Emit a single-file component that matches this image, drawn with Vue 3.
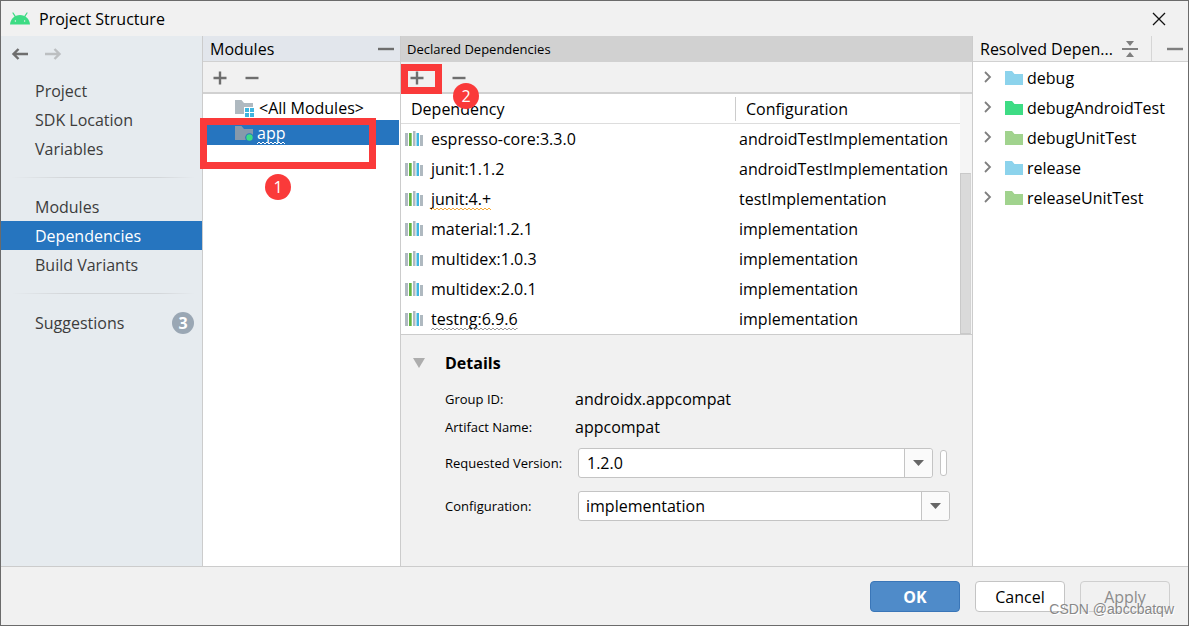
<script setup>
import { ref } from 'vue'

const sections = [
  ['Project', 'SDK Location', 'Variables'],
  ['Modules', 'Dependencies', 'Build Variants'],
  ['Suggestions'],
]
const current = ref('Dependencies')

const dependencies = [
  { name: 'espresso-core:3.3.0', config: 'androidTestImplementation' },
  { name: 'junit:1.1.2', config: 'androidTestImplementation' },
  { name: 'junit:4.+', config: 'testImplementation', mark: 'warn' },
  { name: 'material:1.2.1', config: 'implementation' },
  { name: 'multidex:1.0.3', config: 'implementation' },
  { name: 'multidex:2.0.1', config: 'implementation' },
  { name: 'testng:6.9.6', config: 'implementation', mark: 'weak' },
]

const resolved = [
  { name: 'debug', tone: 'blue' },
  { name: 'debugAndroidTest', tone: 'green' },
  { name: 'debugUnitTest', tone: 'olive' },
  { name: 'release', tone: 'blue' },
  { name: 'releaseUnitTest', tone: 'olive' },
]

const version = ref('1.2.0')
const configuration = ref('implementation')
</script>

<template>
  <div class="window">
    <header class="titlebar">
      <svg class="android" width="20" height="13" viewBox="0 0 20 13" aria-hidden="true">
        <path d="M3 1 L5.2 4.4 M17 1 L14.8 4.4" stroke="#3ddc84" stroke-width="1.2" stroke-linecap="round" />
        <path d="M0 12.5 C0.4 7 4.6 3 10 3 C15.4 3 19.6 7 20 12.5 Z" fill="#3ddc84" />
        <circle cx="5.4" cy="9" r="0.7" fill="#f1f1f1" />
        <circle cx="14.6" cy="9" r="0.7" fill="#f1f1f1" />
      </svg>
      <h1>Project Structure</h1>
      <button class="icon-btn close" aria-label="Close">
        <svg width="14" height="14" viewBox="0 0 14 14"><path d="M1 1 L13 13 M13 1 L1 13" stroke="#111" stroke-width="1.3" /></svg>
      </button>
    </header>

    <main class="body">
      <nav class="sidebar">
        <div class="history">
          <button class="icon-btn" aria-label="Back">
            <svg width="18" height="14" viewBox="0 0 18 14"><path d="M17 7 H2.500 M7.500 2 L2.500 7 L7.500 12" fill="none" stroke="#6e6e6e" stroke-width="2.400" /></svg>
          </button>
          <button class="icon-btn" aria-label="Forward" disabled>
            <svg width="18" height="14" viewBox="0 0 18 14"><path d="M1 7 H15.500 M10.500 2 L15.500 7 L10.500 12" fill="none" stroke="#bcbfc1" stroke-width="2.400" /></svg>
          </button>
        </div>
        <ul v-for="(group, i) in sections" :key="i" class="nav-group">
          <li v-for="item in group" :key="item">
            <a href="#" :class="{ active: item === current }" @click.prevent="current = item">
              {{ item }}
              <span v-if="item === 'Suggestions'" class="count">3</span>
            </a>
          </li>
        </ul>
      </nav>

      <section class="panel modules">
        <div class="panel-head">
          <h2>Modules</h2>
          <button class="icon-btn" aria-label="Hide modules">
            <svg width="16" height="4" viewBox="0 0 16 4"><path d="M0 2 H16" stroke="#6e6e6e" stroke-width="2.400" /></svg>
          </button>
        </div>
        <div class="toolbar">
          <button class="icon-btn" aria-label="Add module">
            <svg width="14" height="14" viewBox="0 0 14 14"><path d="M0.500 7 H13.500 M7 0.500 V13.500" stroke="#6e6e6e" stroke-width="2.400" /></svg>
          </button>
          <button class="icon-btn" aria-label="Remove module">
            <svg width="14" height="14" viewBox="0 0 14 14"><path d="M0.500 7 H13.500" stroke="#6e6e6e" stroke-width="2.400" /></svg>
          </button>
        </div>
        <ul class="module-tree">
          <li>
            <svg width="20" height="18" viewBox="0 0 20 18" aria-hidden="true">
              <path d="M0 1 H6.500 L9 4 H18 V15 H0 Z" fill="#afb9c0" />
              <path d="M9 8 H20 V18 H9 Z" fill="#fff" />
              <path d="M10 9 H14 V13 H10 Z M15 9 H19 V13 H15 Z M10 14 H14 V18 H10 Z M15 14 H19 V18 H15 Z" fill="#40b6e0" />
            </svg>
            <span>&lt;All Modules&gt;</span>
          </li>
          <li class="selected">
            <svg width="18" height="18" viewBox="0 0 18 18" aria-hidden="true">
              <path d="M0 2 H6.500 L9 5 H18 V16 H0 Z" fill="#8699ab" />
              <circle cx="14.500" cy="13.500" r="4.300" fill="#2675bf" />
              <circle cx="14.500" cy="13.500" r="3.200" fill="#3ddc84" />
            </svg>
            <span class="marked">app
              <svg class="wave" height="4" aria-hidden="true">
                <defs><pattern id="wave-white" width="4" height="4" patternUnits="userSpaceOnUse"><path d="M-1 4 L2 1 L5 4" fill="none" stroke="#fff" /></pattern></defs>
                <rect width="100%" height="4" fill="url(#wave-white)" />
              </svg>
            </span>
          </li>
        </ul>
        <div class="callout-box box-module"></div>
        <div class="callout-dot dot-module">1</div>
      </section>

      <section class="panel declared">
        <div class="panel-head">
          <h2>Declared Dependencies</h2>
        </div>
        <div class="toolbar">
          <button class="icon-btn" aria-label="Add dependency">
            <svg width="14" height="14" viewBox="0 0 14 14"><path d="M0.500 7 H13.500 M7 0.500 V13.500" stroke="#6e6e6e" stroke-width="2.400" /></svg>
          </button>
          <button class="icon-btn" aria-label="Remove dependency">
            <svg width="14" height="14" viewBox="0 0 14 14"><path d="M0.500 7 H13.500" stroke="#6e6e6e" stroke-width="2.400" /></svg>
          </button>
        </div>
        <div class="table-area">
          <table>
            <thead>
              <tr>
                <th scope="col">Dependency</th>
                <th scope="col" class="config"><span>Configuration</span></th>
              </tr>
            </thead>
            <tbody>
              <tr v-for="dep in dependencies" :key="dep.name">
                <td>
                  <div class="dep">
                    <svg width="18" height="18" viewBox="0 0 18 18" aria-hidden="true">
                      <path d="M0 3 H3 V16 H0 Z M8 1 H10.500 V16 H8 Z M15 5 H18 V16 H15 Z" fill="#afb9c0" />
                      <path d="M4 3 H6.700 V16 H4 Z" fill="#62b543" />
                      <path d="M11.500 3 H14 V16 H11.500 Z" fill="#40b6e0" />
                    </svg>
                    <span :class="{ marked: dep.mark }">{{ dep.name }}
                      <svg v-if="dep.mark" class="wave" height="4" aria-hidden="true">
                        <defs><pattern :id="'wave-' + dep.mark" width="4" height="4" patternUnits="userSpaceOnUse"><path d="M-1 4 L2 1 L5 4" fill="none" :stroke="dep.mark === 'warn' ? '#f4a836' : '#999'" /></pattern></defs>
                        <rect width="100%" height="4" :fill="`url(#wave-${dep.mark})`" />
                      </svg>
                    </span>
                  </div>
                </td>
                <td class="config">{{ dep.config }}</td>
              </tr>
            </tbody>
          </table>
          <div class="scrollbar"><div class="thumb"></div></div>
        </div>

        <div class="details">
          <div class="details-title">
            <svg width="12" height="10" viewBox="0 0 12 10" aria-hidden="true"><path d="M0 0 H12 L6 10 Z" fill="#adadad" /></svg>
            <h3>Details</h3>
          </div>
          <dl class="facts">
            <dt>Group ID:</dt>
            <dd>androidx.appcompat</dd>
            <dt>Artifact Name:</dt>
            <dd>appcompat</dd>
          </dl>
          <div class="field">
            <label for="version">Requested Version:</label>
            <div class="combo">
              <input id="version" v-model="version" type="text" />
              <button class="drop" aria-label="Show versions">
                <svg width="12" height="6" viewBox="0 0 12 6"><path d="M0 0 H11 L5.500 6 Z" fill="#666" /></svg>
              </button>
            </div>
            <button class="extra" aria-label="Bind to variable"></button>
          </div>
          <div class="field">
            <label for="configuration">Configuration:</label>
            <div class="combo">
              <select id="configuration" v-model="configuration">
                <option>implementation</option>
                <option>testImplementation</option>
                <option>androidTestImplementation</option>
              </select>
              <span class="drop over">
                <svg width="12" height="6" viewBox="0 0 12 6"><path d="M0 0 H11 L5.500 6 Z" fill="#666" /></svg>
              </span>
            </div>
          </div>
        </div>
        <div class="callout-box box-add"></div>
        <div class="callout-dot dot-add">2</div>
      </section>

      <section class="panel resolved">
        <div class="panel-head">
          <h2>Resolved Depen...</h2>
          <button class="icon-btn collapse" aria-label="Collapse all">
            <svg width="16" height="16" viewBox="0 0 16 16"><path d="M4 0 H12 L8 5 Z M4 16 H12 L8 11 Z M0 7 H16 V9 H0 Z" fill="#7f7f7f" /></svg>
          </button>
          <button class="icon-btn hide" aria-label="Hide resolved dependencies">
            <svg width="16" height="4" viewBox="0 0 16 4"><path d="M0 2 H16" stroke="#7f7f7f" stroke-width="2.400" /></svg>
          </button>
        </div>
        <ul class="variants">
          <li v-for="v in resolved" :key="v.name">
            <svg width="8" height="14" viewBox="0 0 8 14" aria-hidden="true"><path d="M1 1 L6 6 L1 11" fill="none" stroke="#7f7f7f" stroke-width="1.800" /></svg>
            <svg :class="v.tone" width="18" height="14" viewBox="0 0 18 14" aria-hidden="true"><path d="M0 0 H7 L9.500 3 H18 V14 H0 Z" fill="currentColor" /></svg>
            <span>{{ v.name }}</span>
          </li>
        </ul>
      </section>
    </main>

    <footer class="footer">
      <button class="btn primary">OK</button>
      <button class="btn">Cancel</button>
      <button class="btn" disabled>Apply</button>
      <span class="watermark">CSDN @abccbatqw</span>
    </footer>
  </div>
</template>

<style>
body {
  background: #f1f1f1;
}
</style>

<style scoped>
.window {
  box-sizing: border-box;
  min-height: 100vh;
  display: flex;
  flex-direction: column;
  border: 1px solid #6b6b6b;
  background: #f1f1f1;
  color: #000;
  font: 16px/24px "Open Sans", "Noto Sans", sans-serif;
}
.window * {
  box-sizing: border-box;
}
h1, h2, h3, ul, dl, dd {
  margin: 0;
  padding: 0;
  font: inherit;
  list-style: none;
}
svg {
  display: block;
  flex: none;
}
button, input, select {
  font: inherit;
  color: inherit;
}
.icon-btn {
  display: flex;
  padding: 0;
  border: 0;
  background: none;
}

.titlebar {
  display: flex;
  align-items: center;
  height: 35px;
  padding: 0 22px 0 9px;
  gap: 9px;
}
.close {
  margin-left: auto;
}

.body {
  flex: 1;
  display: grid;
  grid-template-columns: 202px 198px 1fr 215px;
  border-bottom: 1px solid #ccc;
}

.sidebar {
  background: #e6ebef;
  border-right: 1px solid #ccc;
}
.history {
  display: flex;
  gap: 15px;
  padding: 11px 10px 15px;
}
.nav-group + .nav-group {
  padding-top: 29px;
  background: linear-gradient(90deg, transparent, #d3d6d9 30%, #d3d6d9 80%, transparent) 10px 14px / 184px 1px no-repeat;
}
.sidebar a {
  display: flex;
  align-items: center;
  justify-content: space-between;
  height: 29px;
  padding: 0 8px 0 34px;
  color: #3c3c3c;
  text-decoration: none;
}
.sidebar a.active {
  background: #2675bf;
  color: #fff;
}
.count {
  width: 22px;
  height: 22px;
  border-radius: 50%;
  background: #9aa7b4;
  color: #fff;
  font-weight: bold;
  line-height: 22px;
  text-align: center;
}

.panel {
  position: relative;
  display: flex;
  flex-direction: column;
  min-width: 0;
  border-right: 1px solid #ccc;
}
.panel-head {
  display: flex;
  align-items: center;
  height: 26px;
  border-bottom: 1px solid #d1d1d1;
}
.toolbar {
  display: flex;
  align-items: center;
  height: 32px;
  padding-top: 2px;
  border-bottom: 2px solid #d1d1d1;
}

.modules {
  background: #fff;
}
.modules .panel-head {
  justify-content: space-between;
  padding: 0 6px 0 7px;
  background: #e2e6ec;
}
.modules .toolbar {
  gap: 18px;
  padding-left: 10px;
  background: #f1f1f1;
}
.module-tree {
  padding: 1px 1px 0 0;
}
.module-tree li {
  display: flex;
  align-items: center;
  gap: 4px;
  height: 25px;
  padding-left: 32px;
}
.module-tree .selected {
  background: #2675bf;
  color: #fff;
}
.marked {
  position: relative;
}
.wave {
  position: absolute;
  left: 0;
  bottom: 0;
  width: 100%;
}

.declared .panel-head {
  padding-left: 6px;
  background: #d1d1d1;
  font-size: 13px;
}
.declared .toolbar {
  gap: 28px;
  padding-left: 9px;
}
.table-area {
  display: flex;
  background: #fff;
  border-bottom: 1px solid #ccc;
}
table {
  flex: 1;
  border-collapse: separate;
  border-spacing: 0;
  table-layout: fixed;
}
th, td {
  height: 30px;
  padding: 0 0 0 4px;
  text-align: left;
  font-weight: normal;
}
thead th {
  padding-left: 10px;
  border-bottom: 1px solid #ddd;
}
.config {
  width: 225px;
}
th.config {
  padding-left: 0;
}
th.config span {
  display: block;
  padding-left: 10px;
  border-left: 1px solid #ccc;
}
.dep {
  display: flex;
  align-items: center;
  gap: 8px;
}
.scrollbar {
  display: flex;
  align-items: flex-end;
  width: 12px;
  background: #f5f5f5;
}
.thumb {
  width: 11px;
  height: 67%;
  border: 1px solid #c9c9c9;
  border-right-color: #d4d4d4;
  background: #dadada;
}

.details {
  padding: 16px 22px 20px 12px;
}
.details-title {
  display: flex;
  align-items: center;
  gap: 20px;
  margin-bottom: 10px;
  font-weight: bold;
}
.facts {
  display: grid;
  grid-template-columns: 130px 1fr;
  padding-left: 32px;
  line-height: 28px;
}
.facts dt, .field label {
  font-size: 13px;
}
.field {
  display: flex;
  align-items: center;
  margin: 7px 0 13px 32px;
}
.field + .field {
  margin-top: 0;
}
.field label {
  flex: 0 0 133px;
}
.combo {
  position: relative;
  display: flex;
  flex: 1;
  height: 30px;
  border: 1px solid #c4c4c4;
  border-radius: 3px;
  background: #fff;
}
.combo input, .combo select {
  flex: 1;
  min-width: 0;
  padding: 0 8px;
  border: 0;
  background: none;
  appearance: none;
  outline: none;
}
.combo select {
  padding: 0 7px;
}
.drop {
  display: flex;
  align-items: center;
  justify-content: center;
  width: 28px;
  padding: 0;
  border: 0;
  border-left: 1px solid #c4c4c4;
  border-radius: 0 3px 3px 0;
  background: #fafafa;
}
.drop.over {
  position: absolute;
  inset: 0 0 0 auto;
  pointer-events: none;
}
.extra {
  width: 7px;
  height: 26px;
  margin: 0 3px 0 7px;
  padding: 0;
  border: 1px solid #c4c4c4;
  border-radius: 3px;
  background: #fff;
}

.resolved {
  background: #fff;
  border-right: 0;
}
.resolved .panel-head {
  padding: 0 5px 0 7px;
  background: #f1f1f1;
}
.resolved h2 {
  flex: 1;
  white-space: nowrap;
}
.collapse {
  margin: 0 13px 0 8px;
}
.hide {
  align-items: center;
  height: 100%;
  padding-left: 15px;
  border-left: 1px solid #d6d6d6;
}
.variants {
  padding-top: 1px;
}
.variants li {
  display: flex;
  align-items: center;
  height: 30px;
  padding-left: 11px;
}
.variants svg + svg {
  margin: 0 4px 0 13px;
}
.blue {
  color: #8cd3ec;
}
.green {
  color: #3ddc84;
}
.olive {
  color: #a1d38e;
}

.callout-box {
  position: absolute;
  border: 7px solid #fa3a3a;
}
.box-module {
  top: 82px;
  left: -3px;
  width: 176px;
  height: 51px;
}
.box-add {
  top: 28px;
  left: 0;
  width: 41px;
  height: 30px;
}
.callout-dot {
  position: absolute;
  width: 26px;
  height: 26px;
  border-radius: 50%;
  background: #fa3a3a;
  color: #fff;
  line-height: 26px;
  text-align: center;
}
.dot-module {
  top: 138px;
  left: 62px;
}
.dot-add {
  top: 47px;
  left: 52px;
}

.footer {
  position: relative;
  display: flex;
  justify-content: flex-end;
  gap: 15px;
  padding: 14px 18px 13px;
}
.btn {
  width: 90px;
  height: 31px;
  padding: 0;
  border: 1px solid #c4c4c4;
  border-radius: 4px;
  background: #fff;
}
.btn.primary {
  border-color: #3a76b8;
  background: #4f8bc9;
  color: #fff;
  font-weight: bold;
}
.btn:disabled {
  border-color: #cfcfcf;
  background: none;
  color: #8c8c8c;
}
.watermark {
  position: absolute;
  right: 14px;
  bottom: 5px;
  color: #888;
  font: 14px/22px "Liberation Sans", Arial, sans-serif;
  text-shadow: 1px 1px 0 #fff;
}
</style>
